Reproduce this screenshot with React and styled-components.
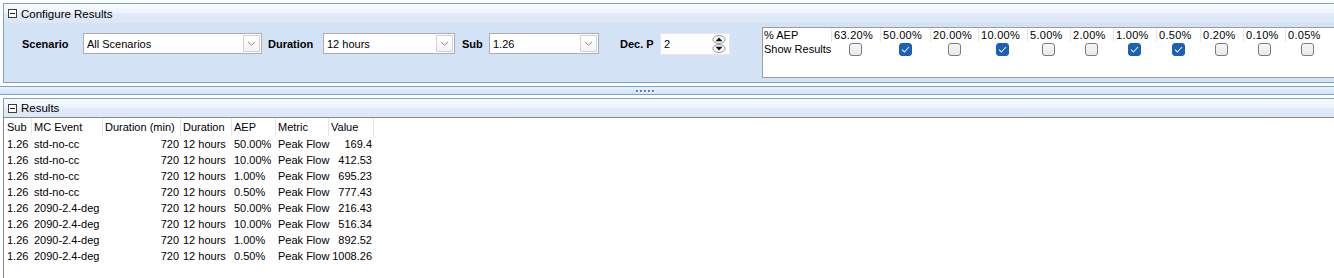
import React from "react";
import styled, { createGlobalStyle } from "styled-components";

const GlobalStyle = createGlobalStyle`
  html, body {
    margin: 0;
    padding: 0;
    background: #fff;
  }
  body {
    font-family: "Liberation Sans", Arial, sans-serif;
    font-size: 11px;
    color: #000;
  }
`;

const aepCols = [
  { label: "63.20%", w: 49, on: false },
  { label: "50.00%", w: 50, on: true },
  { label: "20.00%", w: 48, on: false },
  { label: "10.00%", w: 49, on: true },
  { label: "5.00%", w: 43, on: false },
  { label: "2.00%", w: 43, on: false },
  { label: "1.00%", w: 43, on: true },
  { label: "0.50%", w: 44, on: true },
  { label: "0.20%", w: 43, on: false },
  { label: "0.10%", w: 42, on: false },
  { label: "0.05%", w: 44, on: false },
];

const columns = [
  { title: "Sub", w: 28 },
  { title: "MC Event", w: 71 },
  { title: "Duration (min)", w: 78, right: true },
  { title: "Duration", w: 51 },
  { title: "AEP", w: 44 },
  { title: "Metric", w: 53 },
  { title: "Value", w: 45, right: true },
];

const rows = [
  ["1.26", "std-no-cc", "720", "12 hours", "50.00%", "Peak Flow", "169.4"],
  ["1.26", "std-no-cc", "720", "12 hours", "10.00%", "Peak Flow", "412.53"],
  ["1.26", "std-no-cc", "720", "12 hours", "1.00%", "Peak Flow", "695.23"],
  ["1.26", "std-no-cc", "720", "12 hours", "0.50%", "Peak Flow", "777.43"],
  ["1.26", "2090-2.4-deg", "720", "12 hours", "50.00%", "Peak Flow", "216.43"],
  ["1.26", "2090-2.4-deg", "720", "12 hours", "10.00%", "Peak Flow", "516.34"],
  ["1.26", "2090-2.4-deg", "720", "12 hours", "1.00%", "Peak Flow", "892.52"],
  ["1.26", "2090-2.4-deg", "720", "12 hours", "0.50%", "Peak Flow", "1008.26"],
];

const gridTemplate = columns.map((c) => c.w + "px").join(" ");

const App = () => {
  return (
    <>
      <GlobalStyle />
      <Page>
        <ConfigPanel>
          <PanelHeader>
            <Collapse />
            <span>Configure Results</span>
          </PanelHeader>
          <ConfigBody>
            <Controls>
              <Label $w={61} $pl={0}>Scenario</Label>
              <Combo $w={179}>
                <ComboText>All Scenarios</ComboText>
                <DropButton>
                  <Chevron />
                </DropButton>
              </Combo>
              <Label $w={61} $pl={6}>Duration</Label>
              <Combo $w={132}>
                <ComboText>12 hours</ComboText>
                <DropButton>
                  <Chevron />
                </DropButton>
              </Combo>
              <Label $w={34} $pl={7}>Sub</Label>
              <Combo $w={110}>
                <ComboText>1.26</ComboText>
                <DropButton>
                  <Chevron />
                </DropButton>
              </Combo>
              <Label $w={61} $pl={21}>Dec. P</Label>
              <Spinner>
                <ComboText>2</ComboText>
                <SpinArrows />
              </Spinner>
            </Controls>
            <AepBox>
              <AepRow>
                <AepLabel>% AEP</AepLabel>
                {aepCols.map((c) => (
                  <AepHead key={c.label} $w={c.w}>
                    {c.label}
                  </AepHead>
                ))}
              </AepRow>
              <AepRow>
                <AepLabel>Show Results</AepLabel>
                {aepCols.map((c) => (
                  <AepCell key={c.label} $w={c.w}>
                    <Check $on={c.on}>{c.on && <Tick />}</Check>
                  </AepCell>
                ))}
              </AepRow>
            </AepBox>
          </ConfigBody>
        </ConfigPanel>

        <Splitter>
          <Grip>
            {[0, 1, 2, 3, 4].map((i) => (
              <Dot key={i} />
            ))}
          </Grip>
        </Splitter>

        <ResultsHeader>
          <Collapse />
          <span>Results</span>
        </ResultsHeader>
        <Grid>
          <HeadRow>
            {columns.map((c) => (
              <HeadCell key={c.title}>{c.title}</HeadCell>
            ))}
          </HeadRow>
          {rows.map((r, i) => (
            <DataRow key={i}>
              {r.map((v, j) => (
                <Cell key={j} $right={columns[j].right} $first={j === 0}>
                  {v}
                </Cell>
              ))}
            </DataRow>
          ))}
        </Grid>
      </Page>
    </>
  );
};

const Chevron = () => (
  <svg width="9" height="5" viewBox="0 0 9 5">
    <path d="M1 0.8 L4.5 4.2 L8 0.8" fill="none" stroke="#8a8a8a" strokeWidth="1" />
  </svg>
);

const Tick = () => (
  <svg width="9" height="7" viewBox="0 0 9 7">
    <path d="M1 3.6 L3.4 6 L8 1" fill="none" stroke="#e8f0fb" strokeWidth="1.1" />
  </svg>
);

const SpinArrows = () => (
  <SpinSvg width="14" height="18" viewBox="0 0 14 18">
    <ellipse cx="7" cy="4.5" rx="6.2" ry="4" fill="#f6f6f6" stroke="#9a9a9a" />
    <ellipse cx="7" cy="13.5" rx="6.2" ry="4" fill="#f6f6f6" stroke="#9a9a9a" />
    <path d="M3.5 6.3 L7 2.6 L10.5 6.3 Z" fill="#111" />
    <path d="M3.5 11.7 L7 15.4 L10.5 11.7 Z" fill="#111" />
  </SpinSvg>
);

const Page = styled.div`
  width: 1334px;
  height: 278px;
  overflow: hidden;
  padding-top: 3px;
  box-sizing: border-box;
  display: flex;
  flex-direction: column;
`;

const ConfigPanel = styled.div`
  margin-left: 3px;
  height: 80px;
  box-sizing: border-box;
  border: 1px solid #7ba2d6;
  border-right: none;
  display: flex;
  flex-direction: column;
  overflow: hidden;
`;

const headerGradient = `linear-gradient(
  to bottom,
  #f7fafe 0%,
  #eef4fc 45%,
  #e0eaf8 52%,
  #dce7f7 100%
)`;

const PanelHeader = styled.div`
  height: 19px;
  flex: none;
  display: flex;
  align-items: center;
  gap: 4px;
  padding-left: 4px;
  background: ${headerGradient};
  font-size: 11.5px;
`;

const Collapse = styled.span`
  position: relative;
  width: 9px;
  height: 9px;
  box-sizing: border-box;
  border: 1px solid #3c3c3c;
  background: #fff;
  flex: none;
  &::after {
    content: "";
    position: absolute;
    left: 1px;
    right: 1px;
    top: 3px;
    height: 1px;
    background: #222;
  }
`;

const ConfigBody = styled.div`
  flex: 1;
  background: #d4e2f6;
  display: flex;
  align-items: flex-start;
  padding-left: 18px;
`;

const Controls = styled.div`
  margin-top: 10px;
  display: flex;
  align-items: center;
  height: 22px;
  flex: none;
`;

const Label = styled.span`
  width: ${({ $w }) => $w}px;
  padding-left: ${({ $pl }) => $pl}px;
  box-sizing: border-box;
  font-weight: bold;
  font-size: 11px;
  white-space: nowrap;
  flex: none;
`;

const Combo = styled.div`
  width: ${({ $w }) => $w}px;
  height: 21px;
  box-sizing: border-box;
  border: 1px solid #abadb3;
  background: #fff;
  display: flex;
  align-items: center;
  justify-content: space-between;
  padding: 1px 1px 1px 0;
  flex: none;
  align-self: flex-start;
`;

const ComboText = styled.span`
  padding-left: 3px;
  font-size: 11px;
`;

const DropButton = styled.div`
  width: 17px;
  height: 17px;
  box-sizing: border-box;
  border: 1px solid #d2d2d2;
  background: linear-gradient(#ffffff, #f4f4f4);
  display: flex;
  align-items: center;
  justify-content: center;
`;

const Spinner = styled.div`
  width: 70px;
  height: 22px;
  box-sizing: border-box;
  border: 1px solid #e4e8ee;
  background: #fff;
  display: flex;
  align-items: center;
  justify-content: space-between;
  padding-right: 3px;
  flex: none;
`;

const SpinSvg = styled.svg`
  display: block;
`;

const AepBox = styled.div`
  margin-top: 4px;
  margin-left: 32px;
  width: 620px;
  height: 51px;
  box-sizing: border-box;
  border: 1px solid #9c9c9c;
  border-right: none;
  background: #fff;
  flex: none;
`;

const AepRow = styled.div`
  display: flex;
  height: 14px;
  align-items: stretch;
`;

const AepLabel = styled.div`
  width: 67px;
  flex: none;
  padding-left: 1px;
  display: flex;
  align-items: center;
  font-size: 11px;
  white-space: nowrap;
`;

const AepHead = styled.div`
  width: ${({ $w }) => $w}px;
  flex: none;
  box-sizing: border-box;
  border-left: 1px solid #e6e6e6;
  padding-left: 2px;
  display: flex;
  align-items: center;
  font-size: 11px;
  letter-spacing: 0.3px;
  white-space: nowrap;
`;

const AepCell = styled.div`
  width: ${({ $w }) => $w}px;
  flex: none;
  display: flex;
  align-items: center;
  justify-content: center;
  padding-top: 1px;
`;

const Check = styled.span`
  width: 13px;
  height: 13px;
  box-sizing: border-box;
  border-radius: 3px;
  border: 1px solid ${({ $on }) => ($on ? "#1b5fb5" : "#7c7c7c")};
  background: ${({ $on }) =>
    $on ? "#1b61b8" : "linear-gradient(#f7f7f7, #e8e8e8)"};
  display: flex;
  align-items: center;
  justify-content: center;
`;

const Splitter = styled.div`
  margin-top: 3px;
  height: 9px;
  box-sizing: border-box;
  border-top: 1px solid #7ba2d6;
  border-bottom: 1px solid #7ba2d6;
  background: linear-gradient(#eaf1fb, #d2e1f5);
  display: flex;
  align-items: center;
  justify-content: center;
  padding-right: 45px;
`;

const Grip = styled.div`
  display: flex;
  gap: 2px;
  margin-top: 1px;
`;

const Dot = styled.span`
  width: 2px;
  height: 2px;
  background: #5b82bd;
  box-shadow: 1px 1px 0 #fff;
`;

const ResultsHeader = styled.div`
  margin-top: 3px;
  margin-left: 3px;
  height: 19px;
  box-sizing: border-box;
  border-top: 1px solid #7ba2d6;
  border-left: 1px solid #7ba2d6;
  display: flex;
  align-items: center;
  gap: 4px;
  padding-left: 4px;
  background: ${headerGradient};
  font-size: 11.5px;
`;

const Grid = styled.div`
  margin-left: 3px;
  flex: 1;
  border-top: 1px solid #828790;
  border-left: 1px solid #828790;
  background: #fff;
`;

const HeadRow = styled.div`
  display: grid;
  grid-template-columns: ${gridTemplate};
  height: 18px;
`;

const HeadCell = styled.div`
  border-right: 1px solid #e5e5e5;
  padding-left: 2px;
  display: flex;
  align-items: center;
  white-space: nowrap;
  &:first-child {
    padding-left: 3px;
  }
`;

const DataRow = styled.div`
  display: grid;
  grid-template-columns: ${gridTemplate};
  height: 16px;
`;

const Cell = styled.div`
  display: flex;
  align-items: center;
  justify-content: ${({ $right }) => ($right ? "flex-end" : "flex-start")};
  padding: 0 2px 0 ${({ $first }) => ($first ? "3px" : "2px")};
  white-space: nowrap;
`;

export default App;
